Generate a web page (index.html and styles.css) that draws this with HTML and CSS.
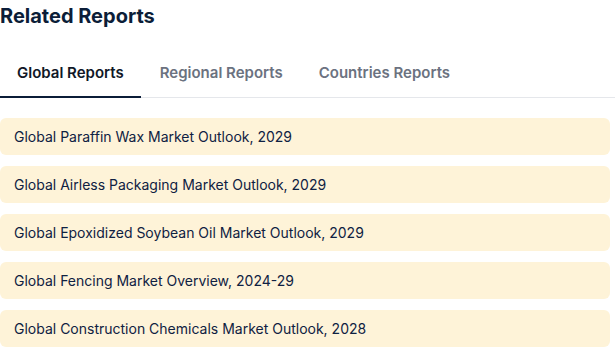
FILE: index.html
```html
<!DOCTYPE html>
<html lang="en">
<head>
    <meta charset="UTF-8">
    <meta name="viewport" content="width=device-width, initial-scale=1.0">
    <title>Related Reports</title>
    <link rel="stylesheet" href="styles.css">
</head>
<body>
    <div class="related">
        <h2>Related Reports</h2>
        <div class="tabs">
            <div class="tab active">Global Reports</div>
            <div class="tab">Regional Reports</div>
            <div class="tab">Countries Reports</div>
        </div>
        <div class="report-list">
            <a class="report" href="#">Global Paraffin Wax Market Outlook, 2029</a>
            <a class="report" href="#">Global Airless Packaging Market Outlook, 2029</a>
            <a class="report" href="#">Global Epoxidized Soybean Oil Market Outlook, 2029</a>
            <a class="report" href="#">Global Fencing Market Overview, 2024-29</a>
            <a class="report" href="#">Global Construction Chemicals Market Outlook, 2028</a>
        </div>
    </div>
</body>
</html>
```

FILE: styles.css
```css
body {
    margin: 0;
    background: #ffffff;
    font-family: Inter, "Noto Sans", sans-serif;
}

.related {
    width: 610px;
}

h2 {
    margin: 0;
    padding-top: 3px;
    font-size: 20px;
    line-height: 26px;
    font-weight: 700;
    color: #0b1d38;
}

.tabs {
    display: flex;
    gap: 2px;
    margin-top: 29px;
    border-bottom: 1px solid #e5e7eb;
    width: 615px;
}

.tab {
    padding: 0 17px;
    height: 40px;
    font-size: 15px;
    font-weight: 600;
    line-height: 30px;
    color: #6b7280;
    margin-bottom: -1px;
    border-bottom: 2px solid transparent;
    box-sizing: border-box;
}

.tab.active {
    color: #111827;
    border-bottom-color: #0b1d38;
}

.report-list {
    display: flex;
    flex-direction: column;
    gap: 11px;
    margin-top: 20px;
}

.report {
    display: block;
    background-color: #fef3d8;
    border-radius: 6px;
    padding: 0 14px;
    height: 37px;
    line-height: 37px;
    font-size: 14px;
    color: #0f2142;
    text-decoration: none;
}
```
